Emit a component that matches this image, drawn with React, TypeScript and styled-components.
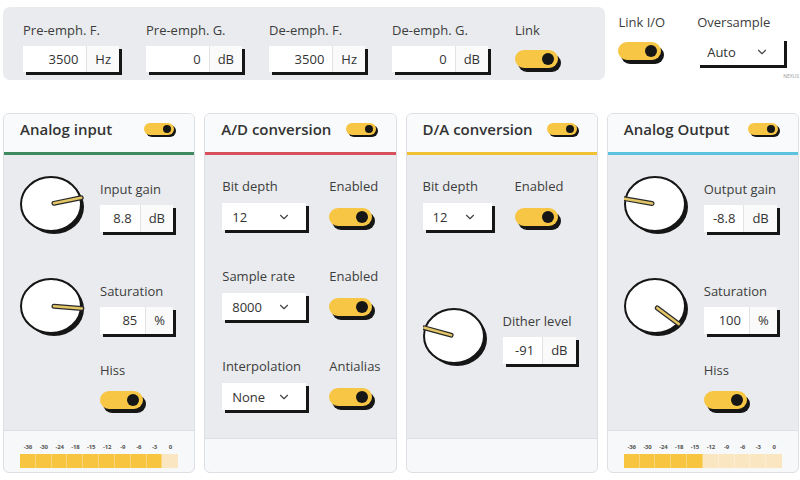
import React from 'react';
import styled, { createGlobalStyle } from 'styled-components';
import { ChevronDown } from 'lucide-react';

const GlobalStyle = createGlobalStyle`
  html, body {
    margin: 0;
    padding: 0;
    background: #ffffff;
    overflow: hidden;
  }
  body {
    font-family: 'Open Sans', 'Noto Sans', sans-serif;
    color: #333;
  }
`;

const INK = '#161616';
const YELLOW = '#f7c644';

const Page = styled.div`
  width: 800px;
  height: 480px;
  box-sizing: border-box;
  padding: 7px 1px 0 3px;
  overflow: hidden;
`;

const TopRow = styled.div`
  display: flex;
  height: 73px;
`;

const EmphasisBar = styled.div`
  width: 603px;
  box-sizing: border-box;
  background: #e9ebee;
  border-radius: 7px;
  padding: 15px 20px 0;
  display: flex;
  gap: 27px;
`;

const Field = styled.div<{ $offset?: number }>`
  display: flex;
  flex-direction: column;
  align-items: flex-start;
  gap: ${(p) => p.$offset ?? 8}px;
`;

const Label = styled.div`
  font-size: 13px;
  line-height: 16px;
  color: #3d3d3d;
  white-space: nowrap;
`;

const NumberBox = styled.div<{ $width: number; $height: number }>`
  display: flex;
  width: ${(p) => p.$width}px;
  height: ${(p) => p.$height}px;
  background: #fff;
  box-shadow: 3px 3px 0 ${INK};
  font-size: 13px;
  color: #333;
`;

const NumberValue = styled.div`
  flex: 1;
  display: flex;
  align-items: center;
  justify-content: flex-end;
  padding-right: 8px;
`;

const NumberUnit = styled.div`
  display: flex;
  align-items: center;
  padding: 0 8px;
  border-left: 1px solid #e3e3e3;
  background: #fafafa;
`;

const SelectBox = styled.div<{ $width: number }>`
  display: flex;
  align-items: center;
  justify-content: space-between;
  box-sizing: border-box;
  width: ${(p) => p.$width}px;
  height: 27px;
  padding: 0 15px 0 10px;
  background: #fff;
  box-shadow: 3px 3px 0 ${INK};
  font-size: 13px;
  color: #333;
`;

const ToggleTrack = styled.div<{ $small?: boolean }>`
  display: flex;
  align-items: center;
  justify-content: flex-end;
  box-sizing: border-box;
  width: ${(p) => (p.$small ? 30 : 43)}px;
  height: ${(p) => (p.$small ? 12 : 18)}px;
  padding: 0 ${(p) => (p.$small ? 3 : 4)}px;
  border-radius: 999px;
  background: ${YELLOW};
  box-shadow: ${(p) => (p.$small ? '2px 2px' : '3px 4px')} 0 ${INK};
  flex-shrink: 0;
`;

const ToggleDot = styled.span<{ $small?: boolean }>`
  width: ${(p) => (p.$small ? 8 : 12)}px;
  height: ${(p) => (p.$small ? 8 : 12)}px;
  border-radius: 50%;
  background: ${INK};
`;

const SideGroup = styled.div<{ $gap: number; $left: number }>`
  display: flex;
  flex-direction: column;
  align-items: flex-start;
  gap: ${(p) => p.$gap}px;
  margin-left: ${(p) => p.$left}px;
  padding-top: 7px;
`;

const TinyNote = styled.div`
  font-size: 5px;
  line-height: 6px;
  color: #9a9a9a;
  padding-left: 86px;
  white-space: nowrap;
`;

const PanelRow = styled.div`
  display: grid;
  grid-template-columns: repeat(4, 1fr);
  gap: 9px;
  margin-top: 33px;
  height: 360px;
`;

const Panel = styled.div`
  display: flex;
  flex-direction: column;
  border: 1px solid #dcdfe3;
  border-radius: 6px;
  overflow: hidden;
  background: #f7f8f9;
`;

const PanelHeader = styled.div<{ $accent: string }>`
  display: flex;
  align-items: center;
  box-sizing: border-box;
  height: 41px;
  padding: 0 20px 8px 16px;
  background: #f9fafb;
  border-bottom: 3px solid ${(p) => p.$accent};
  flex-shrink: 0;
`;

const PanelTitle = styled.div`
  font-size: 15px;
  font-weight: 600;
  color: #333;
  white-space: nowrap;
  flex: 1;
`;

const PanelBody = styled.div<{ $pad: string }>`
  flex: 1;
  background: #e9ebee;
  padding: ${(p) => p.$pad};
  display: flex;
  flex-direction: column;
`;

const PanelFooter = styled.div<{ $height: number }>`
  height: ${(p) => p.$height}px;
  box-sizing: border-box;
  border-top: 1px solid #dcdfe3;
  padding: 12px 16px 0;
  flex-shrink: 0;
`;

const KnobRow = styled.div<{ $top: number }>`
  display: flex;
  align-items: center;
  gap: 14px;
  margin-top: ${(p) => p.$top}px;
`;

const Indented = styled.div<{ $top: number }>`
  margin-top: ${(p) => p.$top}px;
  padding-left: 80px;
`;

const ControlGrid = styled.div<{ $col: number }>`
  display: grid;
  grid-template-columns: ${(p) => p.$col}px 1fr;
  row-gap: 38px;
  align-items: end;
`;

const ToggleCell = styled.div`
  height: 27px;
  display: flex;
  align-items: center;
`;

const MeterScale = styled.div`
  display: grid;
  grid-template-columns: repeat(10, 1fr);
  font-size: 6px;
  line-height: 8px;
  font-weight: 700;
  color: #555;
  text-align: center;
  letter-spacing: -0.2px;
`;

const MeterBar = styled.div`
  display: grid;
  grid-template-columns: repeat(10, 1fr);
  height: 14px;
  margin-top: 3px;
`;

const MeterCell = styled.div<{ $on: boolean }>`
  background: ${(p) => (p.$on ? '#f7c540' : '#fbe6c2')};
  border-right: 1px solid rgba(255, 255, 255, 0.3);
  &:last-child {
    border-right: none;
  }
`;

const Toggle = ({ small }: { small?: boolean }) => (
  <ToggleTrack $small={small}>
    <ToggleDot $small={small} />
  </ToggleTrack>
);

const NumberInput = ({
  value,
  unit,
  width,
  height,
}: {
  value: string;
  unit: string;
  width: number;
  height: number;
}) => (
  <NumberBox $width={width} $height={height}>
    <NumberValue>{value}</NumberValue>
    <NumberUnit>{unit}</NumberUnit>
  </NumberBox>
);

const Select = ({ value, width }: { value: string; width: number }) => (
  <SelectBox $width={width}>
    <span>{value}</span>
    <ChevronDown size={14} strokeWidth={2} color="#444" />
  </SelectBox>
);

const Knob = ({ angle }: { angle: number }) => {
  const cx = 31;
  const cy = 28;
  const rx = 30;
  const ry = 27;
  const rad = (angle * Math.PI) / 180;
  const x1 = cx + Math.sin(rad) * 3;
  const y1 = cy - Math.cos(rad) * 3;
  const x2 = cx + Math.sin(rad) * (rx + 1);
  const y2 = cy - Math.cos(rad) * (ry + 1);
  return (
    <svg width={66} height={60} viewBox="0 0 66 60" style={{ flexShrink: 0 }}>
      <ellipse cx={cx + 3} cy={cy + 3} rx={rx} ry={ry} fill={INK} />
      <ellipse cx={cx} cy={cy} rx={rx} ry={ry} fill="#fff" stroke={INK} strokeWidth={2} />
      <line x1={x1} y1={y1} x2={x2} y2={y2} stroke="#2a2a2a" strokeWidth={5} strokeLinecap="round" />
      <line x1={x1} y1={y1} x2={x2} y2={y2} stroke="#e2c565" strokeWidth={2.5} strokeLinecap="round" />
    </svg>
  );
};

const KnobControl = ({
  top,
  angle,
  label,
  value,
  unit,
}: {
  top: number;
  angle: number;
  label: string;
  value: string;
  unit: string;
}) => (
  <KnobRow $top={top}>
    <Knob angle={angle} />
    <Field $offset={8}>
      <Label>{label}</Label>
      <NumberInput value={value} unit={unit} width={73} height={27} />
    </Field>
  </KnobRow>
);

const Meter = ({ lit }: { lit: number }) => {
  const marks = ['-36', '-30', '-24', '-18', '-15', '-12', '-9', '-6', '-3', '0'];
  return (
    <>
      <MeterScale>
        {marks.map((m) => (
          <span key={m}>{m}</span>
        ))}
      </MeterScale>
      <MeterBar>
        {marks.map((m, i) => (
          <MeterCell key={m} $on={i < lit} />
        ))}
      </MeterBar>
    </>
  );
};

const emphasis = [
  { label: 'Pre-emph. F.', value: '3500', unit: 'Hz' },
  { label: 'Pre-emph. G.', value: '0', unit: 'dB' },
  { label: 'De-emph. F.', value: '3500', unit: 'Hz' },
  { label: 'De-emph. G.', value: '0', unit: 'dB' },
];

export default function App() {
  return (
    <>
      <GlobalStyle />
      <Page>
        <TopRow>
          <EmphasisBar>
            {emphasis.map((f) => (
              <Field key={f.label}>
                <Label>{f.label}</Label>
                <NumberInput value={f.value} unit={f.unit} width={96} height={26} />
              </Field>
            ))}
            <Field $offset={12}>
              <Label>Link</Label>
              <Toggle />
            </Field>
          </EmphasisBar>
          <SideGroup $gap={12} $left={13}>
            <Label>Link I/O</Label>
            <Toggle />
          </SideGroup>
          <SideGroup $gap={8} $left={32}>
            <Label>Oversample</Label>
            <Select value="Auto" width={87} />
            <TinyNote>NEXUS</TinyNote>
          </SideGroup>
        </TopRow>

        <PanelRow>
          <Panel>
            <PanelHeader $accent="#3f8a5e">
              <PanelTitle>Analog input</PanelTitle>
              <Toggle small />
            </PanelHeader>
            <PanelBody $pad="0 16px">
              <KnobControl top={21} angle={77} label="Input gain" value="8.8" unit="dB" />
              <KnobControl top={42} angle={95} label="Saturation" value="85" unit="%" />
              <Indented $top={24}>
                <Field $offset={13}>
                  <Label>Hiss</Label>
                  <Toggle />
                </Field>
              </Indented>
            </PanelBody>
            <PanelFooter $height={42}>
              <Meter lit={9} />
            </PanelFooter>
          </Panel>

          <Panel>
            <PanelHeader $accent="#d8505a">
              <PanelTitle>A/D conversion</PanelTitle>
              <Toggle small />
            </PanelHeader>
            <PanelBody $pad="23px 17px 0">
              <ControlGrid $col={107}>
                <Field $offset={9}>
                  <Label>Bit depth</Label>
                  <Select value="12" width={84} />
                </Field>
                <Field $offset={9}>
                  <Label>Enabled</Label>
                  <ToggleCell>
                    <Toggle />
                  </ToggleCell>
                </Field>
                <Field $offset={9}>
                  <Label>Sample rate</Label>
                  <Select value="8000" width={84} />
                </Field>
                <Field $offset={9}>
                  <Label>Enabled</Label>
                  <ToggleCell>
                    <Toggle />
                  </ToggleCell>
                </Field>
                <Field $offset={9}>
                  <Label>Interpolation</Label>
                  <Select value="None" width={84} />
                </Field>
                <Field $offset={9}>
                  <Label>Antialias</Label>
                  <ToggleCell>
                    <Toggle />
                  </ToggleCell>
                </Field>
              </ControlGrid>
            </PanelBody>
            <PanelFooter $height={34} />
          </Panel>

          <Panel>
            <PanelHeader $accent="#f0c233">
              <PanelTitle>D/A conversion</PanelTitle>
              <Toggle small />
            </PanelHeader>
            <PanelBody $pad="23px 16px 0">
              <ControlGrid $col={92}>
                <Field $offset={9}>
                  <Label>Bit depth</Label>
                  <Select value="12" width={69} />
                </Field>
                <Field $offset={9}>
                  <Label>Enabled</Label>
                  <ToggleCell>
                    <Toggle />
                  </ToggleCell>
                </Field>
              </ControlGrid>
              <KnobControl top={78} angle={287} label="Dither level" value="-91" unit="dB" />
            </PanelBody>
            <PanelFooter $height={34} />
          </Panel>

          <Panel>
            <PanelHeader $accent="#5bc3de">
              <PanelTitle>Analog Output</PanelTitle>
              <Toggle small />
            </PanelHeader>
            <PanelBody $pad="0 16px">
              <KnobControl top={21} angle={281} label="Output gain" value="-8.8" unit="dB" />
              <KnobControl top={42} angle={130} label="Saturation" value="100" unit="%" />
              <Indented $top={24}>
                <Field $offset={13}>
                  <Label>Hiss</Label>
                  <Toggle />
                </Field>
              </Indented>
            </PanelBody>
            <PanelFooter $height={42}>
              <Meter lit={5} />
            </PanelFooter>
          </Panel>
        </PanelRow>
      </Page>
    </>
  );
}
